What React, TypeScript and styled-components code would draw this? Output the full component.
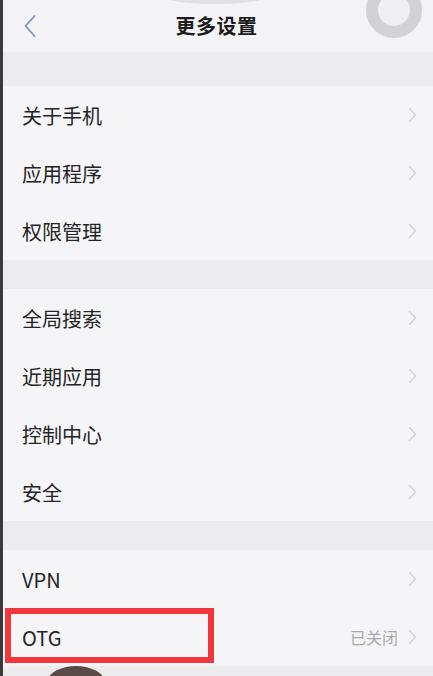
import styled, { createGlobalStyle } from 'styled-components';

const GlobalStyle = createGlobalStyle`
  html, body {
    margin: 0;
    padding: 0;
    background: #ececee;
  }
  body {
    font-family: "Noto Sans CJK SC", "Noto Sans", sans-serif;
  }
`;

const groups = [
  [{ label: '关于手机' }, { label: '应用程序' }, { label: '权限管理' }],
  [{ label: '全局搜索' }, { label: '近期应用' }, { label: '控制中心' }, { label: '安全' }],
  [{ label: 'VPN' }, { label: 'OTG', value: '已关闭', marked: true }],
];

function Chevron() {
  return (
    <svg width="9" height="16" viewBox="0 0 9 16">
      <path d="M1.5 1.5 L7.5 8 L1.5 14.5" fill="none" stroke="#d4d4d8" strokeWidth="1.6" strokeLinecap="round" strokeLinejoin="round" />
    </svg>
  );
}

export default function App() {
  return (
    <Screen>
      <GlobalStyle />
      <Header>
        <BackButton>
          <svg width="14" height="24" viewBox="0 0 14 24">
            <path d="M11.5 2 L2.5 12 L11.5 22" fill="none" stroke="#7b93c2" strokeWidth="1.8" strokeLinecap="round" strokeLinejoin="round" />
          </svg>
        </BackButton>
        <Title>更多设置</Title>
      </Header>

      {groups.map((items, gi) => (
        <Group key={gi} $first={gi === 0}>
          {items.map((item) => (
            <Row key={item.label}>
              <Label>{item.label}</Label>
              <Trail>
                {item.value && <Value>{item.value}</Value>}
                <Chevron />
              </Trail>
              {item.marked && <Highlight />}
            </Row>
          ))}
        </Group>
      ))}

      <FloatBall />
      <Notch />
      <Finger />
      <Edge />
    </Screen>
  );
}

const Screen = styled.div`
  position: relative;
  width: 433px;
  height: 676px;
  overflow: hidden;
  background: #ececee;
`;

const Header = styled.header`
  position: relative;
  display: flex;
  align-items: center;
  justify-content: center;
  height: 52px;
  padding-bottom: 2px;
  box-sizing: border-box;
  background: #f3f3f5;
`;

const BackButton = styled.div`
  position: absolute;
  left: 23px;
  top: 14px;
  display: flex;
`;

const Title = styled.h1`
  margin: 0;
  font-size: 20px;
  font-weight: 700;
  color: #1c1c1e;
  letter-spacing: 0.5px;
`;

const Group = styled.section<{ $first: boolean }>`
  display: flex;
  flex-direction: column;
  margin-top: ${(p) => (p.$first ? '34px' : '29px')};
  background: #f5f5f7;
`;

const Row = styled.div`
  position: relative;
  display: flex;
  align-items: center;
  justify-content: space-between;
  height: 58px;
  padding: 0 16px 0 22px;
`;

const Label = styled.span`
  font-size: 20px;
  color: #242426;
`;

const Trail = styled.div`
  display: flex;
  align-items: center;
  gap: 10px;
`;

const Value = styled.span`
  font-size: 16px;
  color: #a9a9ad;
`;

const Highlight = styled.div`
  position: absolute;
  left: 5px;
  top: 0;
  width: 209px;
  height: 55px;
  box-sizing: border-box;
  border: 6px solid #f0383c;
`;

const FloatBall = styled.div`
  position: absolute;
  right: 11px;
  top: -18px;
  width: 56px;
  height: 56px;
  border-radius: 50%;
  box-sizing: border-box;
  border: 12px solid #d2d2d6;
  background: #efeff1;
`;

const Notch = styled.div`
  position: absolute;
  left: 165px;
  top: -10px;
  width: 100px;
  height: 14px;
  border-radius: 50%;
  background: #dfe0e4;
`;

const Finger = styled.div`
  position: absolute;
  left: 48px;
  top: 666px;
  width: 56px;
  height: 30px;
  border-radius: 50% 50% 0 0;
  background: #5a4b49;
`;

const Edge = styled.div`
  position: absolute;
  left: 0;
  top: 0;
  width: 3px;
  height: 676px;
  background: #3a3a3c;
`;
